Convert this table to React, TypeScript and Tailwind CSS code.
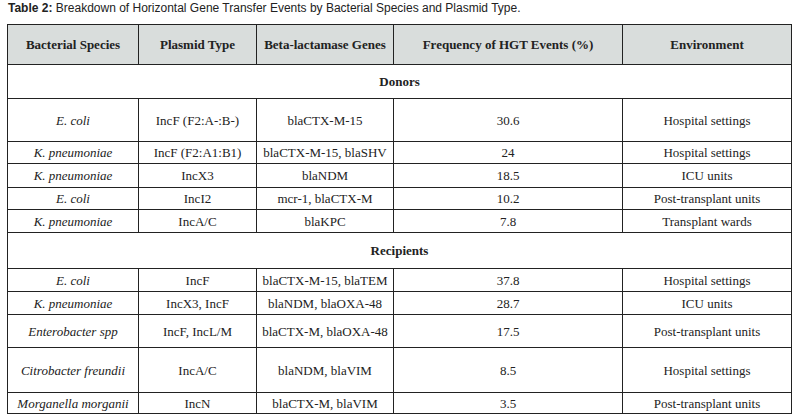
import React from 'react';

type Row = {
    species: string;
    plasmid: string;
    genes: string;
    freq: string;
    env: string;
    h: string;
};

const donors: Row[] = [
    { species: 'E. coli', plasmid: 'IncF (F2:A-:B-)', genes: 'blaCTX-M-15', freq: '30.6', env: 'Hospital settings', h: 'h-[43px]' },
    { species: 'K. pneumoniae', plasmid: 'IncF (F2:A1:B1)', genes: 'blaCTX-M-15, blaSHV', freq: '24', env: 'Hospital settings', h: 'h-[22px]' },
    { species: 'K. pneumoniae', plasmid: 'IncX3', genes: 'blaNDM', freq: '18.5', env: 'ICU units', h: 'h-[24px]' },
    { species: 'E. coli', plasmid: 'IncI2', genes: 'mcr-1, blaCTX-M', freq: '10.2', env: 'Post-transplant units', h: 'h-[22px]' },
    { species: 'K. pneumoniae', plasmid: 'IncA/C', genes: 'blaKPC', freq: '7.8', env: 'Transplant wards', h: 'h-[23px]' },
];

const recipients: Row[] = [
    { species: 'E. coli', plasmid: 'IncF', genes: 'blaCTX-M-15, blaTEM', freq: '37.8', env: 'Hospital settings', h: 'h-[23px]' },
    { species: 'K. pneumoniae', plasmid: 'IncX3, IncF', genes: 'blaNDM, blaOXA-48', freq: '28.7', env: 'ICU units', h: 'h-[23px]' },
    { species: 'Enterobacter spp', plasmid: 'IncF, IncL/M', genes: 'blaCTX-M, blaOXA-48', freq: '17.5', env: 'Post-transplant units', h: 'h-[33px]' },
    { species: 'Citrobacter freundii', plasmid: 'IncA/C', genes: 'blaNDM, blaVIM', freq: '8.5', env: 'Hospital settings', h: 'h-[45px]' },
    { species: 'Morganella morganii', plasmid: 'IncN', genes: 'blaCTX-M, blaVIM', freq: '3.5', env: 'Post-transplant units', h: 'h-[21px]' },
];

const cell = 'border border-[#222] p-0 text-center align-middle';

function DataRow({ row }: { row: Row }) {
    return (
        <tr className={row.h}>
            <td className={`${cell} italic`}>{row.species}</td>
            <td className={cell}>{row.plasmid}</td>
            <td className={cell}>{row.genes}</td>
            <td className={cell}>{row.freq}</td>
            <td className={cell}>{row.env}</td>
        </tr>
    );
}

function GroupRow({ label, h }: { label: string; h: string }) {
    return (
        <tr className={h}>
            <td colSpan={5} className={`${cell} font-bold`}>{label}</td>
        </tr>
    );
}

export default function App() {
    return (
        <div className="w-[807px] h-[415px] bg-white overflow-hidden">
            <p className="pl-[8px] pt-[1px] h-[24px] text-[12px] leading-[14px] text-[#222] font-['Liberation_Sans',Arial,sans-serif]">
                <span className="font-bold">Table 2:</span> Breakdown of Horizontal Gene Transfer Events by Bacterial Species and Plasmid Type.
            </p>
            <table className="ml-[7px] w-[784px] table-fixed border-collapse text-[13px] leading-[15px] text-[#222] font-['Liberation_Serif','Times_New_Roman',serif]">
                <colgroup>
                    <col className="w-[131px]" />
                    <col className="w-[118px]" />
                    <col className="w-[137px]" />
                    <col className="w-[229px]" />
                    <col className="w-[169px]" />
                </colgroup>
                <thead>
                    <tr className="h-[40px] bg-[#d9dddc] font-bold">
                        <th className={cell}>Bacterial Species</th>
                        <th className={cell}>Plasmid Type</th>
                        <th className={cell}>Beta-lactamase Genes</th>
                        <th className={cell}>Frequency of HGT Events (%)</th>
                        <th className={cell}>Environment</th>
                    </tr>
                </thead>
                <tbody>
                    <GroupRow label="Donors" h="h-[34px]" />
                    {donors.map((row, i) => (
                        <DataRow key={i} row={row} />
                    ))}
                    <GroupRow label="Recipients" h="h-[36px]" />
                    {recipients.map((row, i) => (
                        <DataRow key={i} row={row} />
                    ))}
                </tbody>
            </table>
        </div>
    );
}
